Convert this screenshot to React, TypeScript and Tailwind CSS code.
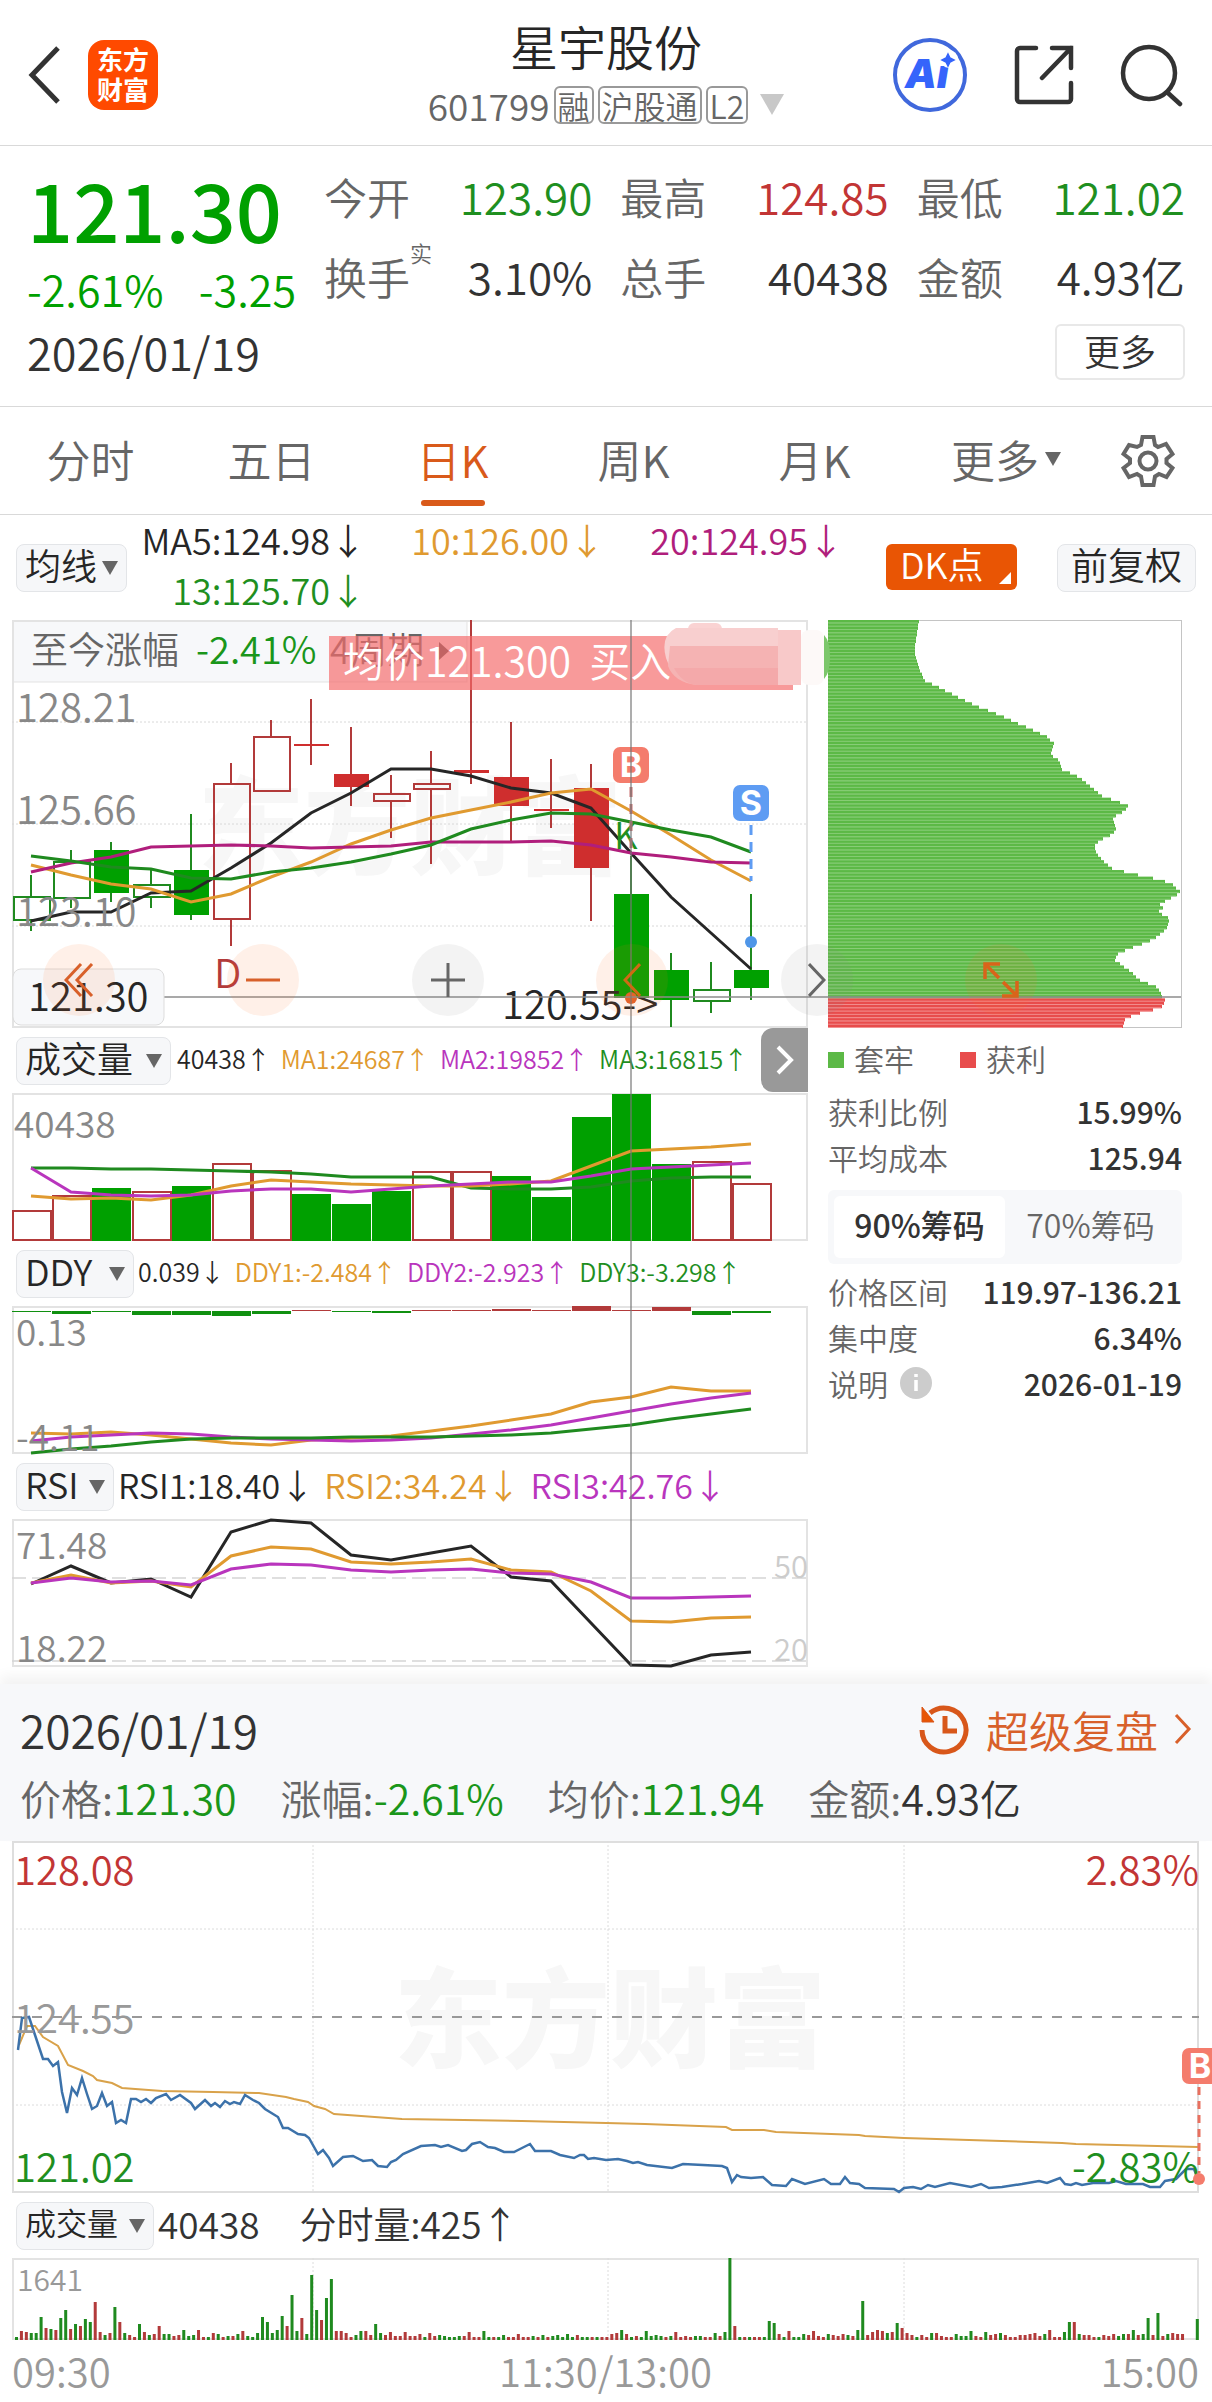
import { useState, type ReactNode } from 'react';
import clsx from 'clsx';

type Candle = {
  high: number;
  top: number;
  bottom: number;
  low: number;
  up: boolean;
  hollow?: boolean;
};

const RED = '#cf2e2e';
const GREEN = '#00a000';
const UP_LINE = '#b23a3a';
const DOWN_LINE = '#1f8a1f';
const ORANGE = '#e09a30';
const PURPLE = '#b935bd';
const MAGENTA = '#b01e7c';
const INK = '#262626';

const STEP = 40;
const centerOf = (index: number) => 19 + index * STEP;

const CANDLES: Candle[] = [
  { high: 255, top: 277, bottom: 300, low: 311, up: false, hollow: true },
  { high: 230, top: 242, bottom: 278, low: 288, up: false, hollow: true },
  { high: 222, top: 230, bottom: 273, low: 282, up: false },
  { high: 249, top: 265, bottom: 277, low: 288, up: false, hollow: true },
  { high: 194, top: 250, bottom: 295, low: 300, up: false },
  { high: 143, top: 164, bottom: 299, low: 326, up: true, hollow: true },
  { high: 100, top: 117, bottom: 171, low: 171, up: true, hollow: true },
  { high: 79, top: 124, bottom: 126, low: 145, up: true },
  { high: 107, top: 154, bottom: 167, low: 186, up: true },
  { high: 155, top: 174, bottom: 181, low: 218, up: true, hollow: true },
  { high: 131, top: 164, bottom: 169, low: 244, up: true, hollow: true },
  { high: 0, top: 150, bottom: 153, low: 164, up: true },
  { high: 102, top: 157, bottom: 186, low: 221, up: true },
  { high: 139, top: 189, bottom: 191, low: 208, up: true },
  { high: 144, top: 168, bottom: 248, low: 301, up: true },
  { high: 236, top: 274, bottom: 378, low: 378, up: false },
  { high: 333, top: 350, bottom: 380, low: 407, up: false },
  { high: 342, top: 370, bottom: 381, low: 393, up: false, hollow: true },
  { high: 274, top: 350, bottom: 368, low: 380, up: false }
];

const MA_LINES = [
  { color: INK, values: [301, 292, 292, 273, 271, 248, 223, 193, 173, 149, 149, 156, 168, 173, 188, 233, 277, 313, 349] },
  { color: ORANGE, values: [245, 255, 264, 269, 282, 274, 257, 242, 224, 210, 198, 190, 182, 173, 169, 191, 215, 240, 261] },
  { color: MAGENTA, values: [252, 243, 237, 227, 226, 225, 226, 228, 227, 226, 222, 222, 222, 221, 225, 233, 237, 242, 243] },
  { color: DOWN_LINE, values: [236, 241, 247, 249, 258, 259, 252, 248, 242, 234, 225, 209, 200, 193, 194, 202, 210, 217, 232] }
];

const VOLUMES = [
  { top: 118, up: true }, { top: 103, up: true }, { top: 95, up: false }, { top: 99, up: true },
  { top: 93, up: false }, { top: 71, up: true }, { top: 78, up: true }, { top: 101, up: false },
  { top: 111, up: false }, { top: 98, up: false }, { top: 79, up: true }, { top: 79, up: true },
  { top: 83, up: false }, { top: 104, up: false }, { top: 24, up: false }, { top: 1, up: false },
  { top: 71, up: false }, { top: 69, up: true }, { top: 91, up: true }
];

const VOLUME_LINES = [
  { color: DOWN_LINE, values: [75, 75, 76, 76, 77, 78, 79, 81, 84, 84, 84, 95, 96, 96, 94, 88, 85, 84, 84] },
  { color: ORANGE, values: [103, 106, 105, 107, 102, 93, 87, 89, 91, 92, 93, 93, 91, 88, 73, 58, 56, 54, 51] },
  { color: PURPLE, values: [75, 99, 102, 103, 102, 98, 96, 96, 99, 96, 93, 91, 89, 89, 83, 76, 74, 72, 70] }
];

// positive = inflow (red, above zero), negative = outflow (green, below zero)
const DDY_BARS = [-1, -3, -1, -4, -4, -5, -3, 1, -1, -2, 1, 1, 2, 1, 5, 1, 4, -4, -2];

const DDY_LINES = [
  { color: ORANGE, values: [127, 128, 126, 129, 133, 137, 139, 134, 132, 130, 125, 120, 114, 108, 96, 91, 81, 85, 85] },
  { color: PURPLE, values: [135, 131, 129, 127, 128, 131, 133, 134, 135, 134, 132, 128, 124, 119, 112, 105, 98, 92, 87] },
  { color: DOWN_LINE, values: [147, 143, 140, 136, 133, 132, 132, 132, 131, 131, 131, 130, 129, 127, 123, 119, 113, 108, 103] }
];

const RSI_LINES = [
  { color: INK, values: [65, 47, 64, 60, 78, 13, 1, 4, 36, 41, 34, 27, 58, 62, 104, 146, 147, 136, 133] },
  { color: ORANGE, values: [64, 56, 64, 62, 68, 37, 28, 30, 43, 45, 43, 40, 51, 53, 72, 102, 103, 99, 98] },
  { color: PURPLE, values: [64, 59, 63, 62, 66, 50, 45, 46, 51, 53, 51, 50, 54, 55, 63, 79, 79, 78, 77] }
];

// [y, width] knots of the chip distribution
const CHIPS: [number, number][] = [
  [0, 91], [25, 87], [33, 87], [47, 91], [59, 97], [70, 119], [83, 145], [95, 175], [105, 197], [115, 219],
  [122, 226], [133, 223], [140, 232], [148, 234], [155, 250], [167, 265], [174, 273], [180, 290], [184, 300],
  [190, 296], [196, 285], [208, 288], [213, 284], [219, 271], [223, 267], [232, 268], [238, 274], [247, 284],
  [252, 304], [258, 331], [262, 344], [271, 353], [278, 340], [281, 334], [284, 331], [287, 336], [290, 330],
  [297, 341], [305, 340], [313, 332], [320, 321], [324, 309], [332, 290], [339, 287], [346, 297], [353, 306],
  [359, 312], [365, 328], [370, 333], [377, 334], [378, 337], [386, 334], [392, 310], [397, 297], [407, 294]
];

const chipWidthAt = (y: number) => {
  for (let i = 1; i < CHIPS.length; i++) {
    const [y0, w0] = CHIPS[i - 1];
    const [y1, w1] = CHIPS[i];
    if (y <= y1) {
      return Math.round(w0 + ((w1 - w0) * (y - y0)) / (y1 - y0));
    }
  }
  return CHIPS[CHIPS.length - 1][1];
};

const PRICE_LINE =
  '6,209 10,177 17,176 23,194 31,218 36,218 41,225 46,221 50,251 55,272 60,247 65,254 70,237 75,253 80,268 85,265 90,252 95,265 100,261 104,282 109,279 114,282 119,258 124,258 129,261 134,258 139,262 144,257 154,253 159,259 168,254 179,262 183,268 193,259 199,265 203,262 208,266 213,260 218,263 222,261 228,263 233,254 241,259 247,262 253,268 266,276 271,287 276,287 286,293 293,294 297,297 306,313 311,309 317,317 321,325 331,316 341,315 351,320 360,319 366,325 375,326 379,321 384,319 391,313 409,305 423,304 429,306 436,304 450,310 454,309 460,303 468,301 476,306 483,307 492,311 502,311 510,307 518,303 523,310 539,310 548,314 562,317 568,314 572,314 576,318 582,317 594,319 606,318 615,320 621,322 626,321 635,324 660,327 671,323 691,324 710,325 715,327 720,341 725,334 729,336 739,337 751,336 760,344 774,345 780,338 793,343 812,338 819,343 828,343 833,336 838,342 847,343 853,347 882,348 887,351 892,347 901,346 909,348 916,344 923,346 938,342 959,346 969,343 977,347 990,346 1010,343 1027,340 1035,342 1048,337 1053,343 1059,344 1064,342 1070,344 1081,342 1097,342 1104,340 1114,343 1131,343 1138,346 1148,346 1153,340 1164,338 1174,328 1182,328 1186,338';

const AVERAGE_LINE =
  '7,204 15,185 23,185 31,196 46,205 56,224 71,230 81,235 85,239 100,242 110,247 150,250 201,251 247,252 274,256 282,258 296,261 302,265 313,268 322,273 390,278 510,280 594,282 633,283 714,286 720,289 752,289 764,291 847,294 853,295 892,297 1050,302 1064,303 1186,306';

// minute volume, negative = falling minute
const MINUTES = [
  -3, 9, 8, -7, -7, -23, 12, -11, 10, -22, -30, 11, -16, 14, -21, -18, 38, 8, -5, 7, -33, 18, -7, 5, 3, -16, 8, -5, 6, 14,
  -6, -6, 4, 5, -10, -4, -5, 10, 3, -3, 7, -6, 3, -4, 4, -6, 9, -4, -3, -7, -23, -18, -7, -10, -24, 14, -45, -9, 22, -6,
  -65, -30, 20, -42, -61, 9, 9, 7, 3, -5, -9, 9, 5, -16, -7, 5, 8, 4, 4, 8, 4, 4, 6, -3, 7, 4, -5, -4, -3, -3,
  -4, 4, 8, 3, 3, -9, -3, 3, -3, -5, 3, 3, 6, 3, 3, -4, 3, -5, 3, -4, -5, -3, -6, -3, 5, -3, -3, 3, -3, 3,
  3, 6, 7, -10, 6, -3, 4, -3, -9, -4, -5, -4, 3, -4, 8, 3, 4, 3, -4, -4, 3, 3, -7, 4, -8, -82, 14, -3, 3, -3,
  3, 3, -3, -19, -17, 6, -3, 9, -3, -3, -6, 5, 9, 4, 3, -6, 5, 4, 6, -5, 4, -10, -39, 5, 8, 10, 9, -7, 8, -17,
  12, 7, 5, -3, 5, 3, -7, 7, 4, 3, 3, -6, -4, -4, -9, 4, 3, -8, 5, 6, -7, 5, 3, 3, 5, 5, 6, 7, 4, -6,
  10, 3, 3, -8, -18, 18, -6, 5, 5, 3, -3, 5, 4, 6, -4, -6, 6, -10, 5, -6, -22, 5, -27, 4, -6, 7, 6, 6, 0, 0, -21
];

const toPoints = (values: number[]) => values.map((y, i) => `${centerOf(i)},${y}`).join(' ');

const Lines = ({ lines }: { lines: { color: string; values: number[] }[] }) => (
  <>
    {lines.map((line) => (
      <polyline key={line.color} points={toPoints(line.values)} fill="none" stroke={line.color} strokeWidth="3" />
    ))}
  </>
);

const Triangle = ({ className }: { className?: string }) => (
  <svg viewBox="0 0 16 14" className={clsx('shrink-0', className)} aria-hidden="true">
    <path d="M0 0h16L8 14z" fill="currentColor" />
  </svg>
);

const Picker = ({ label, options, className }: { label: string; options: string[]; className?: string }) => (
  <label
    className={clsx(
      'flex h-12 shrink-0 items-center justify-between rounded-lg border border-[#e3e5e8] bg-[#f6f7f9] pl-2 pr-2 text-[#262626]',
      className
    )}
  >
    <select aria-label={label} className="min-w-0 flex-1 appearance-none bg-transparent pb-2 leading-[38px] outline-none">
      {options.map((option) => (
        <option key={option}>{option}</option>
      ))}
    </select>
    <Triangle className="pointer-events-none w-4 text-[#666666]" />
  </label>
);

const QuoteItem = ({ label, note, value, tone }: { label: string; note?: string; value: string; tone: string }) => (
  <div className="flex items-center justify-between">
    <dt className="flex text-[43px] text-[#666666]">
      {label}
      {note && <sup className="top-0 pt-1 text-[22px] leading-none">{note}</sup>}
    </dt>
    <dd className={tone}>{value}</dd>
  </div>
);

const IndicatorRow = ({ picker, children }: { picker: ReactNode; children: ReactNode }) => (
  <div className="flex h-[65px] items-center whitespace-nowrap pl-1">
    {picker}
    {children}
  </div>
);

const TABS = ['分时', '五日', '日K', '周K', '月K'];

const TAG = 'rounded-md border-2 border-[#999999] px-0.5 text-[32px] leading-[34px]';

const ROUND_BUTTON = 'flex size-[72px] items-center justify-center rounded-full';

const Header = () => (
  <header className="flex h-[146px] items-center justify-between border-b border-[#d9d9d9] px-7 pt-1">
    <div className="flex w-[300px] items-center gap-7">
      <button type="button" aria-label="返回">
        <svg viewBox="0 0 32 58" className="h-[58px] w-8" fill="none" stroke="#333333" strokeWidth="5">
          <path d="M30 2 4 29l26 27" />
        </svg>
      </button>
      <div className="flex size-[70px] flex-col items-center justify-center rounded-2xl bg-[#ff4a00] pb-0.5 text-[26px] font-bold leading-[30px] text-white">
        <span>东方</span>
        <span>财富</span>
      </div>
    </div>

    <div className="flex flex-col items-center">
      <h1 className="text-[48px] leading-[60px] text-[#262626]">星宇股份</h1>
      <button type="button" className="flex items-center gap-1 whitespace-nowrap text-[37px] leading-[60px] text-[#666666]">
        601799
        <span className={TAG}>融</span>
        <span className={TAG}>沪股通</span>
        <span className={TAG}>L2</span>
        <Triangle className="ml-2 w-6 text-[#c8c8c8]" />
      </button>
    </div>

    <div className="flex w-[300px] items-center justify-end gap-[46px]">
      <button type="button" aria-label="AI助手">
        <svg viewBox="0 0 76 76" className="size-[76px]">
          <circle cx="38" cy="38" r="35" fill="none" stroke="#4068dc" strokeWidth="4" />
          <g fill="#3564fb" className="font-[Inter] text-[40px] font-black italic">
            <text x="13" y="51">Ai</text>
          </g>
          <circle cx="57" cy="22" r="9" fill="#ffffff" />
          <path d="M56 17l2 4 4 2-4 2-2 4-2-4-4-2 4-2z" fill="#3564fb" stroke="#3564fb" strokeWidth="1.5" />
        </svg>
      </button>
      <button type="button" aria-label="分享">
        <svg viewBox="0 0 60 60" className="size-[60px]" fill="none" stroke="#333333" strokeWidth="4.5" strokeLinecap="round">
          <path d="M22 3H6a3 3 0 0 0-3 3v48a3 3 0 0 0 3 3h48a3 3 0 0 0 3-3V38" />
          <path d="M38 3h19v20M57 3 28 33" />
        </svg>
      </button>
      <button type="button" aria-label="搜索">
        <svg viewBox="0 0 64 64" className="size-16" fill="none" stroke="#333333" strokeWidth="4.5" strokeLinecap="round">
          <circle cx="29" cy="30" r="26" />
          <path d="m48 50 12 11" />
        </svg>
      </button>
    </div>
  </header>
);

const Quote = () => (
  <section className="border-b border-[#d9d9d9] px-[27px] pb-6.5 pt-2.5">
    <div className="flex gap-7">
      <div className="w-[269px] shrink-0 whitespace-nowrap text-[#00a000]">
        <p className="text-[81px] font-medium leading-[104px]">121.30</p>
        <p className="flex justify-between text-[43px] leading-[56px]">
          <span>-2.61%</span>
          <span>-3.25</span>
        </p>
      </div>
      <dl className="grid flex-1 grid-cols-3 gap-x-7 whitespace-nowrap text-[44px] leading-[78px] text-[#333333]">
        <QuoteItem label="今开" value="123.90" tone="text-[#1f8f1f]" />
        <QuoteItem label="最高" value="124.85" tone="text-[#c23535]" />
        <QuoteItem label="最低" value="121.02" tone="text-[#1f8f1f]" />
        <QuoteItem label="换手" note="实" value="3.10%" tone="text-[#333333]" />
        <QuoteItem label="总手" value="40438" tone="text-[#333333]" />
        <QuoteItem label="金额" value="4.93亿" tone="text-[#333333]" />
      </dl>
    </div>
    <div className="mt-2 flex items-center justify-between">
      <time dateTime="2026-01-19" className="text-[45px] leading-[56px] text-[#333333]">
        2026/01/19
      </time>
      <button type="button" className="h-14 w-[130px] rounded-md border-2 border-[#e8e8e8] pb-1 text-[36px] leading-none text-[#333333]">
        更多
      </button>
    </div>
  </section>
);

const Tabs = () => {
  const [active, setActive] = useState('日K');

  return (
    <nav className="flex h-[108px] border-b border-[#d9d9d9] text-[44px] text-[#666666]">
      {TABS.map((tab) => (
        <button
          key={tab}
          type="button"
          onClick={() => setActive(tab)}
          className={clsx('relative flex-[181] pb-1', tab === active && 'text-[#d95a1a]')}
        >
          {tab}
          {tab === active && <span className="absolute bottom-2 left-1/2 h-1.5 w-16 -translate-x-1/2 rounded-full bg-[#d95a1a]" />}
        </button>
      ))}
      <button type="button" className="flex flex-[202] items-center justify-center gap-1.5 pb-1">
        更多
        <Triangle className="w-4" />
      </button>
      <button type="button" aria-label="设置" className="flex flex-[91] items-center justify-start pl-3.5">
        <svg viewBox="0 0 54 54" className="size-[54px]" fill="none" stroke="#666666" strokeWidth="4">
          <path d="M21.500 3h11l1.500 8 3 2 8-3 6.500 10-6 5v4l6 5-6 9-7.500-3-4 2.500-1.500 8.500h-11l-1.500-8.500-4-2.500-8 3-5.500-9 6.500-5v-4l-6.500-5 5.500-9 8 2 4-2z" />
          <circle cx="27" cy="27" r="8.5" />
        </svg>
      </button>
    </nav>
  );
};

const AverageBar = () => (
  <section className="flex h-[105px] items-center px-4 text-[36px]">
    <Picker label="主图指标" options={['均线', 'BOLL']} className="w-[111px]" />
    <div className="grid w-[717px] grid-cols-3 whitespace-nowrap pb-2 text-right leading-[50px]">
      <span className="text-[#262626]">MA5:124.98↓</span>
      <span className="text-[#e09a30]">10:126.00↓</span>
      <span className="text-[#b01e7c]">20:124.95↓</span>
      <span className="text-[#1f8f1f]">13:125.70↓</span>
    </div>
    <div className="ml-auto flex gap-10 whitespace-nowrap">
      <button type="button" className="flex h-[46px] w-[131px] items-end justify-between rounded-md bg-[#e95504] pb-1.5 pl-3.5 pr-1.5 text-white">
        <span className="pb-1 leading-[34px]">DK点</span>
        <svg viewBox="0 0 12 12" className="size-3" aria-hidden="true">
          <path d="M12 0v12H0z" fill="currentColor" />
        </svg>
      </button>
      <button type="button" className="h-12 w-[139px] rounded-lg border border-[#e3e5e8] bg-[#f6f7f9] pb-1.5 text-[37px] leading-none text-[#262626]">
        前复权
      </button>
    </div>
  </section>
);

const CandleChart = () => (
  <svg viewBox="0 0 796 408" className="block h-auto w-full overflow-visible text-[40px]" role="img" aria-label="日K线">
    <text x="186" y="246" fill="#f7f7f7" className="text-[106px] font-black">
      东方财富
    </text>
    <rect x="1" y="1" width="454" height="61" fill="#f7f8fa" stroke="#e3e3e3" />
    <rect x="1" y="1" width="794" height="406" fill="none" stroke="#e3e3e3" strokeWidth="2" />
    {[102, 204, 306].map((y) => (
      <line key={y} x1="0" x2="796" y1={y} y2={y} stroke="#d8d8d8" strokeDasharray="2 2" />
    ))}

    <g className="text-[37px]">
      <text x="19" y="44" fill="#666666">至今涨幅</text>
      <text x="184" y="44" fill="#1a961a" className="text-[38px]">-2.41%</text>
      <text x="318" y="44" fill="#666666">4周期</text>
      <path d="M427 22l10 9-10 9z" fill="#555555" />
    </g>

    {CANDLES.map((candle, i) => {
      const cx = centerOf(i);
      const line = candle.up ? UP_LINE : DOWN_LINE;
      return (
        <g key={i} stroke={line} strokeWidth="2">
          <line x1={cx} x2={cx} y1={candle.high} y2={candle.top} />
          <line x1={cx} x2={cx} y1={candle.bottom} y2={candle.low} />
          {candle.hollow ? (
            <rect x={cx - 17} y={candle.top} width="36" height={candle.bottom - candle.top} fill="none" />
          ) : (
            <rect x={cx - 17} y={candle.top} width="35" height={candle.bottom - candle.top} fill={candle.up ? RED : GREEN} stroke="none" />
          )}
        </g>
      );
    })}
    <Lines lines={MA_LINES} />

    <g fill="#888888">
      <text x="4" y="102">128.21</text>
      <text x="4" y="204">125.66</text>
      <text x="4" y="306">123.10</text>
    </g>

    <text x="202" y="368" fill="#b23a3a">D</text>
    <text x="602" y="229" fill="#1f8f1f" className="text-[37px]">K</text>
    <text x="490" y="399" fill="#262626">{'120.55->'}</text>

    <g strokeWidth="3" strokeDasharray="10 7">
      <line x1="619" x2="619" y1="167" y2="230" stroke="#c97070" />
      <line x1="739" x2="739" y1="205" y2="261" stroke="#5e9cf3" />
    </g>
    <circle cx="619" cy="378" r="6" fill="#e2622c" />
    <circle cx="739" cy="322" r="6" fill="#4f96e8" />
    <g textAnchor="middle" fill="#ffffff" className="font-[Inter] text-[34px] font-bold">
      <rect x="601" y="127" width="36" height="36" rx="7" fill="#f47c6c" />
      <text x="619" y="157">B</text>
      <rect x="721" y="165" width="36" height="36" rx="7" fill="#5e9cf3" />
      <text x="739" y="195">S</text>
    </g>

    {/* current price and crosshair level, runs on into the chip chart */}
    <line x1="152" x2="816" y1="377" y2="377" stroke="#8c8c8c" strokeWidth="1.5" />
    <rect x="1" y="349" width="151" height="56" rx="8" fill="#f7f8fa" stroke="#dddddd" />
    <text x="16" y="391" fill="#262626">121.30</text>

    {/* order tooltip with the account part smudged out */}
    <rect x="317" y="16" width="464" height="54" fill="#f46a6a" fillOpacity="0.68" />
    <text x="331" y="57" fill="#ffffff" className="whitespace-pre text-[41px]">
      {'均价121.300  买入'}
    </text>
    <rect x="676" y="3" width="34" height="16" rx="6" fill="#fad3d3" />
    <path d="M664 8h102v50H672q-14-6-18-20-6-22 10-30z" fill="#f8cfcf" />
    <path d="M658 26h118v39H684q-22-3-28-19z" fill="#f5b3b3" />
    <path d="M662 48h104v17H684q-14-2-22-17z" fill="#f4a9aa" />
    <rect x="766" y="10" width="23" height="55" fill="#f8c9c9" />
    <rect x="789" y="10" width="23" height="55" rx="8" fill="#fdf9f8" />
  </svg>
);

const VolumeChart = () => (
  <svg viewBox="0 0 796 148" className="block h-auto w-full overflow-visible" role="img" aria-label="成交量">
    <rect x="1" y="1" width="794" height="146" fill="none" stroke="#e3e3e3" strokeWidth="2" />
    {VOLUMES.map((bar, i) =>
      bar.up ? (
        <rect key={i} x={i * STEP + 1} y={bar.top} width="38" height={147 - bar.top} fill="#ffffff" stroke={UP_LINE} strokeWidth="2" />
      ) : (
        <rect key={i} x={i * STEP} y={bar.top} width="39" height={148 - bar.top} fill={GREEN} />
      )
    )}
    <Lines lines={VOLUME_LINES} />
    <text x="2" y="45" fill="#888888" className="text-[37px]">40438</text>
  </svg>
);

const DdyChart = () => (
  <svg viewBox="0 0 796 148" className="block h-auto w-full overflow-visible" role="img" aria-label="DDY">
    <rect x="1" y="1" width="794" height="146" fill="none" stroke="#e3e3e3" strokeWidth="2" />
    {DDY_BARS.map((value, i) => (
      <rect
        key={i}
        x={i * STEP}
        y={value > 0 ? 5 - value : 5}
        width="39"
        height={Math.abs(value)}
        fill={value > 0 ? UP_LINE : '#109010'}
      />
    ))}
    <Lines lines={DDY_LINES} />
    <g fill="#888888" className="text-[37px]">
      <text x="4" y="40">0.13</text>
      <text x="4" y="145">-4.11</text>
    </g>
  </svg>
);

const RsiChart = () => (
  <svg viewBox="0 0 796 148" className="block h-auto w-full overflow-visible" role="img" aria-label="RSI">
    <rect x="1" y="1" width="794" height="146" fill="none" stroke="#e3e3e3" strokeWidth="2" />
    <g stroke="#d5d5d5" strokeWidth="1.5" strokeDasharray="14 6">
      <line x1="0" x2="796" y1="59" y2="59" />
      <line x1="0" x2="796" y1="142" y2="142" />
    </g>
    <Lines lines={RSI_LINES} />
    <g fill="#888888" className="text-[37px]">
      <text x="4" y="40">71.48</text>
      <text x="4" y="143">18.22</text>
    </g>
    <g fill="#cccccc" textAnchor="end" className="text-[31px]">
      <text x="796" y="59">50</text>
      <text x="796" y="142">20</text>
    </g>
  </svg>
);

const ChipChart = () => {
  const rows = Array.from({ length: 124 }, (_, i) => i * 3.29);

  return (
    <svg viewBox="0 0 354 408" className="block h-auto w-full overflow-visible" role="img" aria-label="筹码分布">
      <rect x="0.5" y="0.5" width="353" height="407" fill="none" stroke="#c4c4c4" />
      {rows.map((y) => {
        const trapped = y < 376;
        const width = chipWidthAt(y);
        return (
          <g key={y}>
            <rect x="0" y={y} width={width} height="3.3" fill={trapped ? '#5cb946' : '#e84c4c'} />
            <rect x="0" y={y + 2.4} width={width - 1} height="0.9" fill={trapped ? '#8ed07e' : '#f39a9a'} />
          </g>
        );
      })}
      <path d="M-4 15q6 6 6 22t-6 22z" fill="#7cc76b" />
      <line x1="0" x2="353" y1="377" y2="377" stroke="#8c8c8c" strokeWidth="1.5" />
    </svg>
  );
};

const ChartToolbar = () => (
  <div className="absolute left-[43px] right-[175px] top-[324px] flex justify-between">
    <button type="button" aria-label="最早" className={clsx(ROUND_BUTTON, 'bg-[#ff6a1a]/10')}>
      <svg viewBox="0 0 30 34" className="h-[34px] w-[30px]" fill="none" stroke="#d8602a" strokeWidth="3">
        <path d="M17 1 2 17l15 16M28 1 13 17l15 16" />
      </svg>
    </button>
    <button type="button" aria-label="缩小" className={clsx(ROUND_BUTTON, 'bg-[#ff6a1a]/10')}>
      <svg viewBox="0 0 34 34" className="size-[34px]" stroke="#d8602a" strokeWidth="3">
        <path d="M0 17h34" />
      </svg>
    </button>
    <button type="button" aria-label="放大" className={clsx(ROUND_BUTTON, 'bg-[#888888]/10')}>
      <svg viewBox="0 0 34 34" className="size-[34px]" stroke="#666666" strokeWidth="3">
        <path d="M0 17h34M17 0v34" />
      </svg>
    </button>
    <button type="button" aria-label="上一根" className={clsx(ROUND_BUTTON, 'bg-[#ff6a1a]/10')}>
      <svg viewBox="0 0 18 34" className="h-[34px] w-[18px]" fill="none" stroke="#cf6a14" strokeWidth="3">
        <path d="M17 1 2 17l15 16" />
      </svg>
    </button>
    <button type="button" aria-label="下一根" className={clsx(ROUND_BUTTON, 'bg-[#888888]/10')}>
      <svg viewBox="0 0 18 34" className="h-[34px] w-[18px]" fill="none" stroke="#666666" strokeWidth="3">
        <path d="m1 1 15 16L1 33" />
      </svg>
    </button>
    <button type="button" aria-label="全屏" className={clsx(ROUND_BUTTON, 'bg-[#ff6a1a]/10')}>
      <svg viewBox="0 0 36 36" className="size-9" fill="none" stroke="#d9641a" strokeWidth="3.5">
        <path d="M2 17V2h15M2 2l14 14M34 19v15H19M34 34 20 20" />
      </svg>
    </button>
  </div>
);

const ChipPanel = () => {
  const [range, setRange] = useState('90%筹码');

  return (
    <aside>
      <ChipChart />
      <div className="flex h-[60px] items-center gap-[10px] whitespace-nowrap pt-1 text-[30px] text-[#666666]">
        <span className="size-4 bg-[#5cb946]" />
        <span className="pb-1">套牢</span>
        <span className="ml-9 size-4 bg-[#e84c4c]" />
        <span className="pb-1">获利</span>
      </div>
      <dl className="whitespace-nowrap text-[30px] leading-[46px]">
        <div className="flex justify-between">
          <dt className="text-[#666666]">获利比例</dt>
          <dd className="font-medium text-[#333333]">15.99%</dd>
        </div>
        <div className="flex justify-between">
          <dt className="text-[#666666]">平均成本</dt>
          <dd className="font-medium text-[#333333]">125.94</dd>
        </div>
      </dl>
      <div className="mb-1 mt-2.5 flex h-[74px] rounded-md bg-[#f7f8fa] p-1.5">
        {['90%筹码', '70%筹码'].map((option) => (
          <button
            key={option}
            type="button"
            onClick={() => setRange(option)}
            className={clsx(
              'flex-1 whitespace-nowrap rounded-md pb-1.5 text-[32px] leading-none',
              option === range ? 'bg-white font-medium text-[#333333]' : 'text-[#666666]'
            )}
          >
            {option}
          </button>
        ))}
      </div>
      <dl className="whitespace-nowrap text-[30px] leading-[46px]">
        <div className="flex justify-between">
          <dt className="text-[#666666]">价格区间</dt>
          <dd className="font-medium text-[#333333]">119.97-136.21</dd>
        </div>
        <div className="flex justify-between">
          <dt className="text-[#666666]">集中度</dt>
          <dd className="font-medium text-[#333333]">6.34%</dd>
        </div>
        <div className="flex justify-between">
          <dt className="flex items-center gap-3 text-[#666666]">
            说明
            <svg viewBox="0 0 32 32" className="size-8" aria-hidden="true">
              <circle cx="16" cy="16" r="16" fill="#cccccc" />
              <path d="M16 13v11M16 7v3" stroke="#ffffff" strokeWidth="3.5" />
            </svg>
          </dt>
          <dd className="font-medium text-[#333333]">2026-01-19</dd>
        </div>
      </dl>
    </aside>
  );
};

const Charts = () => (
  <section className="relative grid grid-cols-[minmax(0,796fr)_minmax(0,354fr)] gap-5 pl-3 pr-[30px]">
    <div className="relative">
      <CandleChart />
      <div className="relative text-[36px]">
        <IndicatorRow picker={<Picker label="副图指标一" options={['成交量', 'MACD']} className="w-[155px]" />}>
          <div className="flex gap-2.5 pb-1 pl-1.5 text-[25px]">
            <span className="text-[#262626]">40438↑</span>
            <span className="text-[#e09a30]">MA1:24687↑</span>
            <span className="text-[#b935bd]">MA2:19852↑</span>
            <span className="text-[#1f8f1f]">MA3:16815↑</span>
          </div>
        </IndicatorRow>
        <button type="button" aria-label="展开" className="absolute right-0 top-0 flex h-16 w-[47px] items-center justify-center rounded-l-xl bg-[#999999]">
          <svg viewBox="0 0 18 30" className="h-[30px] w-[18px]" fill="none" stroke="#ffffff" strokeWidth="4">
            <path d="m2 2 13 13L2 28" />
          </svg>
        </button>
      </div>
      <VolumeChart />
      <div className="text-[36px]">
        <IndicatorRow picker={<Picker label="副图指标二" options={['DDY', 'KDJ']} className="w-[118px]" />}>
          <div className="flex gap-2.5 pb-1 pl-1 text-[25px]">
            <span className="text-[#262626]">0.039↓</span>
            <span className="text-[#e09a30]">DDY1:-2.484↑</span>
            <span className="text-[#b935bd]">DDY2:-2.923↑</span>
            <span className="text-[#1f8f1f]">DDY3:-3.298↑</span>
          </div>
        </IndicatorRow>
      </div>
      <DdyChart />
      <div className="text-[36px]">
        <IndicatorRow picker={<Picker label="副图指标三" options={['RSI', 'WR']} className="w-[98px]" />}>
          <div className="flex gap-2.5 pb-1 pl-1 text-[34px]">
            <span className="text-[#262626]">RSI1:18.40↓</span>
            <span className="text-[#e09a30]">RSI2:34.24↓</span>
            <span className="text-[#b935bd]">RSI3:42.76↓</span>
          </div>
        </IndicatorRow>
      </div>
      <RsiChart />
      <div className="absolute inset-y-0 left-[77.8%] w-0.5 -translate-x-1/2 bg-[#777777]/60" />
    </div>
    <ChipPanel />
    <ChartToolbar />
  </section>
);

const Replay = () => (
  <section className="mt-[17px] bg-[#f7f8fa] px-5 pb-2.5 pt-2.5 shadow-[0_-8px_12px_rgba(0,0,0,0.05)]">
    <div className="flex h-[70px] items-center justify-between">
      <time dateTime="2026-01-19" className="text-[46px] text-[#333333]">2026/01/19</time>
      <a href="#replay" className="flex items-center gap-4 text-[43px] text-[#d8602a]">
        <svg viewBox="0 0 52 52" className="size-[52px]" fill="none" stroke="#d8571a" strokeWidth="5">
          <path d="M4 27a22 22 0 1 0 8-17" />
          <path d="M4 4v15h12z" fill="#e85504" strokeWidth="1" />
          <path d="M27 13v15h12" />
        </svg>
        超级复盘
        <svg viewBox="0 0 18 32" className="h-8 w-[18px]" fill="none" stroke="currentColor" strokeWidth="3">
          <path d="m2 2 13 14L2 30" />
        </svg>
      </a>
    </div>
    <div className="flex h-[67px] items-center gap-[44px] whitespace-nowrap text-[41px] text-[#666666]">
      <span>价格:<span className="text-[#1a961a]">121.30</span></span>
      <span>涨幅:<span className="text-[#1a961a]">-2.61%</span></span>
      <span>均价:<span className="text-[#1a961a]">121.94</span></span>
      <span>金额:<span className="text-[#333333]">4.93亿</span></span>
    </div>
  </section>
);

const IntradayCharts = () => (
  <section className="pl-3 pr-[13px]">
    <svg viewBox="0 0 1187 352" className="block h-auto w-full overflow-visible text-[40px]" role="img" aria-label="分时走势">
      <text x="382" y="218" fill="#f7f7f7" className="text-[108px] font-black">
        东方财富
      </text>
      <rect x="1" y="1" width="1185" height="350" fill="none" stroke="#dedede" strokeWidth="2" />
      <g stroke="#dcdcdc" strokeDasharray="2 2">
        <path d="M301 0v352M596 0v352M892 0v352M0 88h1187M0 264h1187" />
      </g>
      <line x1="0" x2="1187" y1="176" y2="176" stroke="#999999" strokeWidth="2" strokeDasharray="10 10" />
      <polyline points={AVERAGE_LINE} fill="none" stroke="#d9a24a" strokeWidth="2" />
      <polyline points={PRICE_LINE} fill="none" stroke="#3c72aa" strokeWidth="2.5" />
      <text x="2" y="44" fill="#c23535">128.08</text>
      <text x="2" y="192" fill="#999999">124.55</text>
      <text x="2" y="341" fill="#1f8f1f">121.02</text>
      <g textAnchor="end">
        <text x="1187" y="44" fill="#c23535">2.83%</text>
        <text x="1187" y="341" fill="#1f8f1f">-2.83%</text>
      </g>
      <line x1="1187" x2="1187" y1="246" y2="332" stroke="#e8705f" strokeWidth="3" strokeDasharray="8 6" />
      <circle cx="1187" cy="338" r="6" fill="#f47c6c" />
      <rect x="1170" y="207" width="36" height="36" rx="7" fill="#f47c6c" />
      <text x="1188" y="237" textAnchor="middle" fill="#ffffff" className="font-[Inter] text-[34px] font-bold">B</text>
    </svg>

    <div className="flex h-[65px] items-center whitespace-nowrap pl-1 text-[37px] text-[#333333]">
      <Picker label="分时指标" options={['成交量', 'MACD']} className="w-[138px] text-[31px]" />
      <span className="pb-1 pl-1">40438</span>
      <span className="pb-1 pl-10">分时量:425↑</span>
    </div>

    <svg viewBox="0 0 1187 82" className="block h-auto w-full overflow-visible" role="img" aria-label="分时成交量">
      <rect x="1" y="1" width="1185" height="80" fill="none" stroke="#e3e3e3" strokeWidth="2" />
      <path d="M301 0v82M596 0v82M892 0v82" stroke="#dcdcdc" strokeDasharray="2 2" />
      {MINUTES.map((value, i) => (
        <rect key={i} x={3 + i * 4.92} y={82 - Math.abs(value)} width="3" height={Math.abs(value)} fill={value > 0 ? UP_LINE : DOWN_LINE} />
      ))}
      <text x="5" y="33" fill="#999999" className="text-[30px]">1641</text>
    </svg>

    <div className="flex h-[60px] items-center justify-between text-[40px] text-[#999999]">
      <span>09:30</span>
      <span>11:30/13:00</span>
      <span>15:00</span>
    </div>
  </section>
);

const App = () => (
  <div className="min-h-screen overflow-x-hidden bg-white font-['Noto_Sans_CJK_SC',sans-serif] font-[350]">
    <Header />
    <main>
      <Quote />
      <Tabs />
      <AverageBar />
      <Charts />
      <Replay />
      <IntradayCharts />
    </main>
  </div>
);

export default App;
